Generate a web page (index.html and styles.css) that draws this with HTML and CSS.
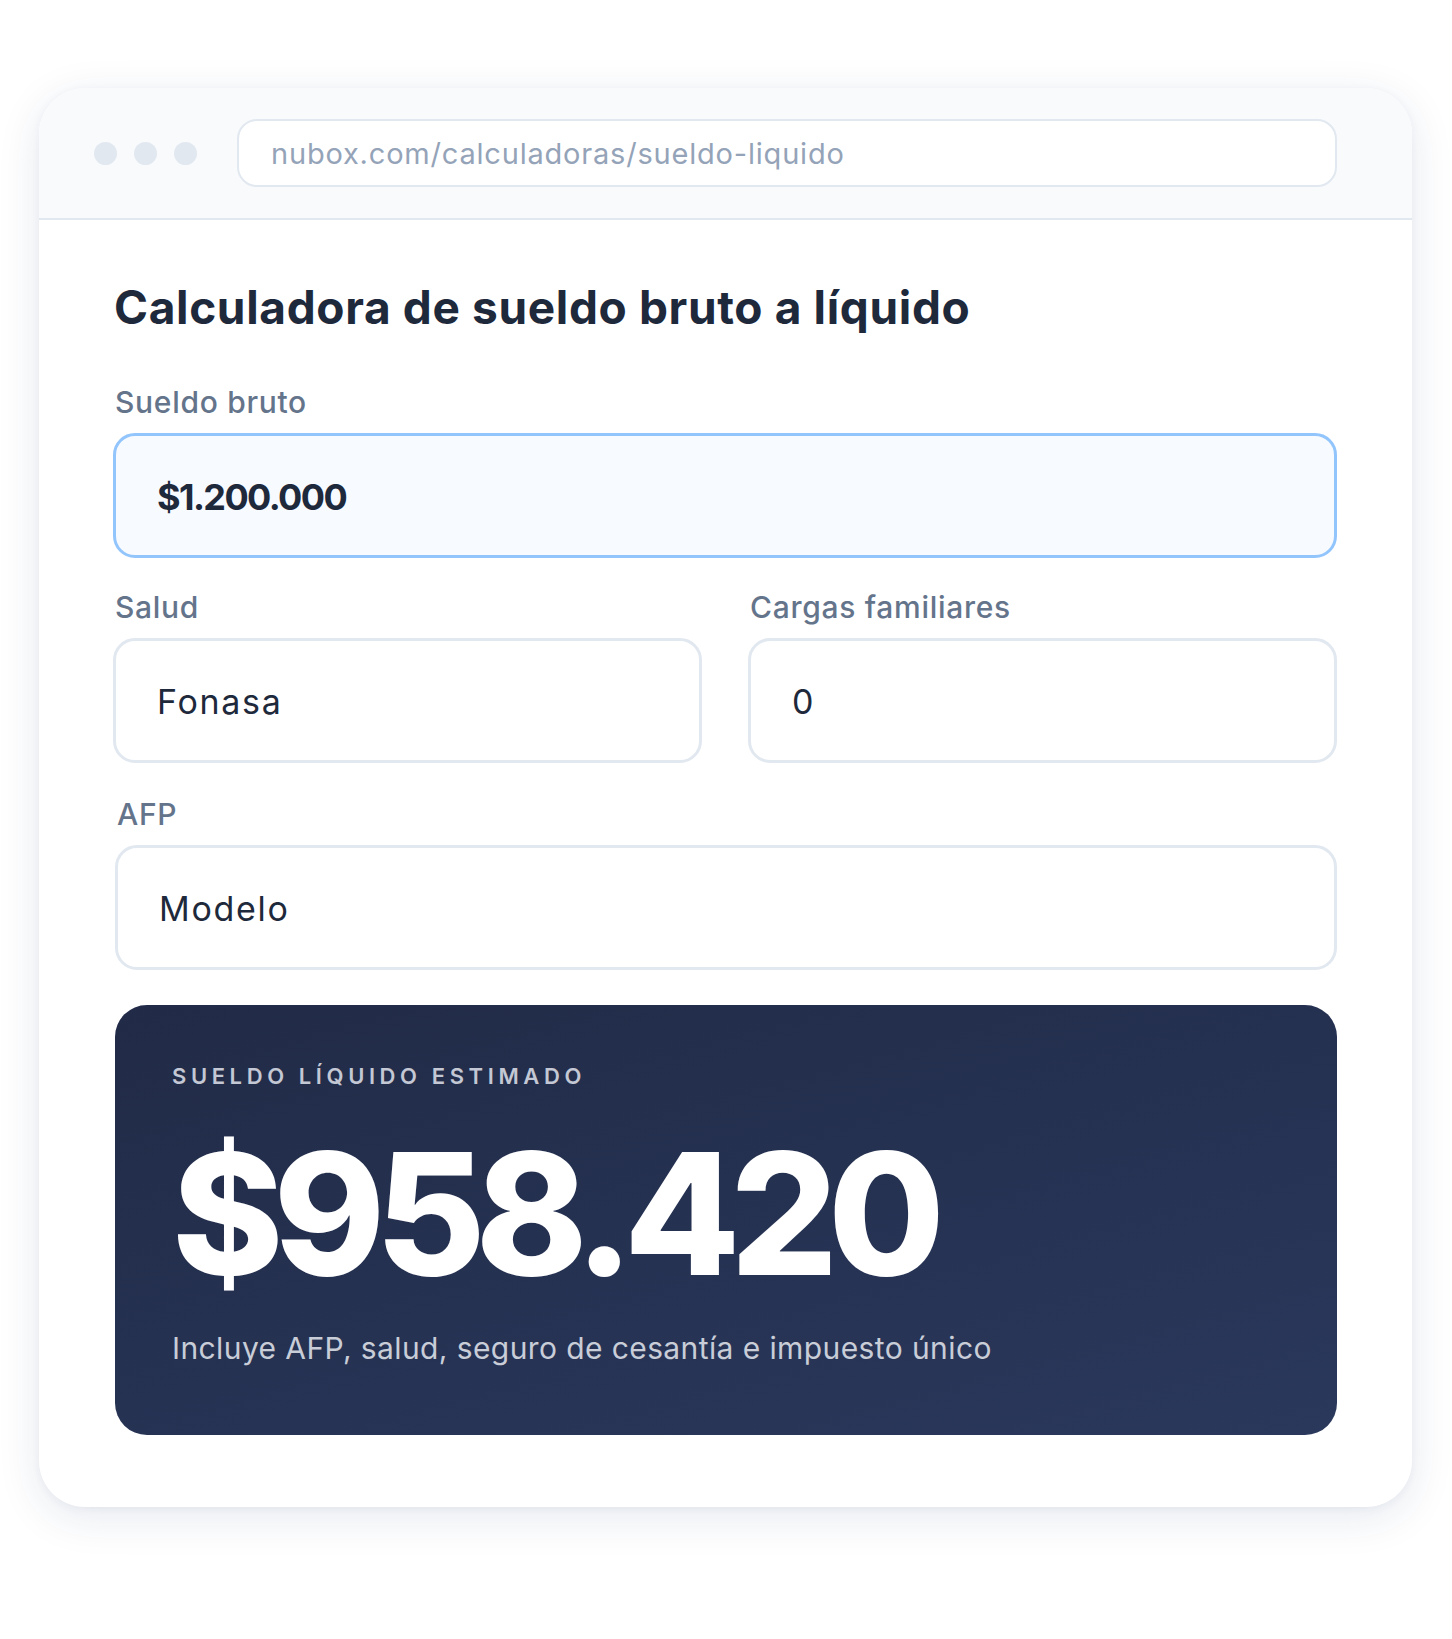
FILE: index.html
```html
<!DOCTYPE html>
<html lang="es">
<head>
<meta charset="utf-8">
<title>Calculadora de sueldo líquido</title>
<link rel="stylesheet" href="styles.css">
</head>
<body>
<div class="stage">
  <div class="window">
    <div class="toolbar">
      <div class="dots">
        <span class="dot"></span><span class="dot"></span><span class="dot"></span>
      </div>
      <div class="url">nubox.com/calculadoras/sueldo-liquido</div>
    </div>
    <div class="content">
      <h1 class="title">Calculadora de sueldo bruto a líquido</h1>
      <div class="field">
        <div class="label">Sueldo bruto</div>
        <div class="box box-active"><span class="value value-strong">$1.200.000</span></div>
      </div>
      <div class="row">
        <div class="field">
          <div class="label">Salud</div>
          <div class="box"><span class="value">Fonasa</span></div>
        </div>
        <div class="field">
          <div class="label">Cargas familiares</div>
          <div class="box"><span class="value">0</span></div>
        </div>
      </div>
      <div class="field field-afp">
        <div class="label">AFP</div>
        <div class="box"><span class="value">Modelo</span></div>
      </div>
      <div class="result">
        <div class="eyebrow">SUELDO LÍQUIDO ESTIMADO</div>
        <div class="amount">$958.420</div>
        <div class="note">Incluye AFP, salud, seguro de cesantía e impuesto único</div>
      </div>
    </div>
  </div>
</div>
</body>
</html>
```
FILE: styles.css
```css
* { box-sizing: border-box; }
html, body { margin: 0; padding: 0; background: #ffffff; }
body {
  font-family: "Inter", "Noto Sans", "Liberation Sans", sans-serif;
  color: #1e293b;
}
.stage {
  width: 1452px;
  height: 1639px;
  padding: 88px 40px 0 39px;
}
.window {
  background: #ffffff;
  border-radius: 46px;
  overflow: hidden;
  box-shadow: 0 10px 44px rgba(30, 55, 110, 0.11), 0 2px 8px rgba(30, 55, 110, 0.05);
}
.toolbar {
  height: 132px;
  background: #f8fafc;
  border-bottom: 2px solid #e2e8f0;
  display: flex;
  align-items: center;
  padding: 0 75px 0 55px;
}
.dots { display: flex; gap: 17px; margin-right: 40px; }
.dot { width: 23px; height: 23px; border-radius: 50%; background: #e2e8f0; }
.url {
  flex: 1;
  height: 68px;
  background: #ffffff;
  border: 2px solid #e2e8f0;
  border-radius: 20px;
  display: flex;
  align-items: center;
  padding-left: 32px;
  font-size: 29px;
  letter-spacing: 0.8px;
  color: #94a3b8;
  line-height: 1;
}
.content {
  padding: 64px 75px 72px 74px;
  display: flex;
  flex-direction: column;
}
.title {
  margin: 0;
  font-size: 46px;
  line-height: 1;
  font-weight: 700;
  letter-spacing: 0.65px;
  color: #1e293b;
  padding-left: 1px;
}
.field { display: flex; flex-direction: column; gap: 16px; }
.content > .field:first-of-type { margin-top: 57px; }
.row {
  display: grid;
  grid-template-columns: 1fr 1fr;
  gap: 46px;
  margin-top: 34px;
}
.field-afp { margin-top: 36px; margin-left: 2px; }
.label {
  font-size: 30px;
  line-height: 1;
  font-weight: 500;
  letter-spacing: 0.7px;
  color: #64748b;
  padding-left: 2px;
}
.box {
  height: 125px;
  border: 3px solid #e2e8f0;
  border-radius: 22px;
  background: #ffffff;
  display: flex;
  align-items: center;
  padding: 3px 0 0 41px;
}
.box-active { border-color: #93c5fd; background: #f7faff; }
.value { font-size: 34px; line-height: 1; color: #1e293b; font-weight: 400; letter-spacing: 1.7px; }
.value-strong { font-size: 36px; font-weight: 700; letter-spacing: -1.6px; }
.result {
  margin-top: 35px;
  margin-left: 2px;
  height: 430px;
  border-radius: 32px;
  background: linear-gradient(165deg, #212b47 0%, #2a385c 100%);
  padding: 60px 0 0 57px;
  display: flex;
  flex-direction: column;
}
.eyebrow {
  font-size: 22px;
  line-height: 1;
  font-weight: 600;
  letter-spacing: 4.6px;
  color: #c3c8d4;
}
.amount {
  margin-top: 42px;
  font-size: 169px;
  line-height: 1;
  font-weight: 800;
  letter-spacing: -10px;
  color: #ffffff;
}
.note {
  margin-top: 35px;
  font-size: 30px;
  line-height: 1;
  font-weight: 400;
  letter-spacing: 0.4px;
  color: #c8cdd8;
}
```
